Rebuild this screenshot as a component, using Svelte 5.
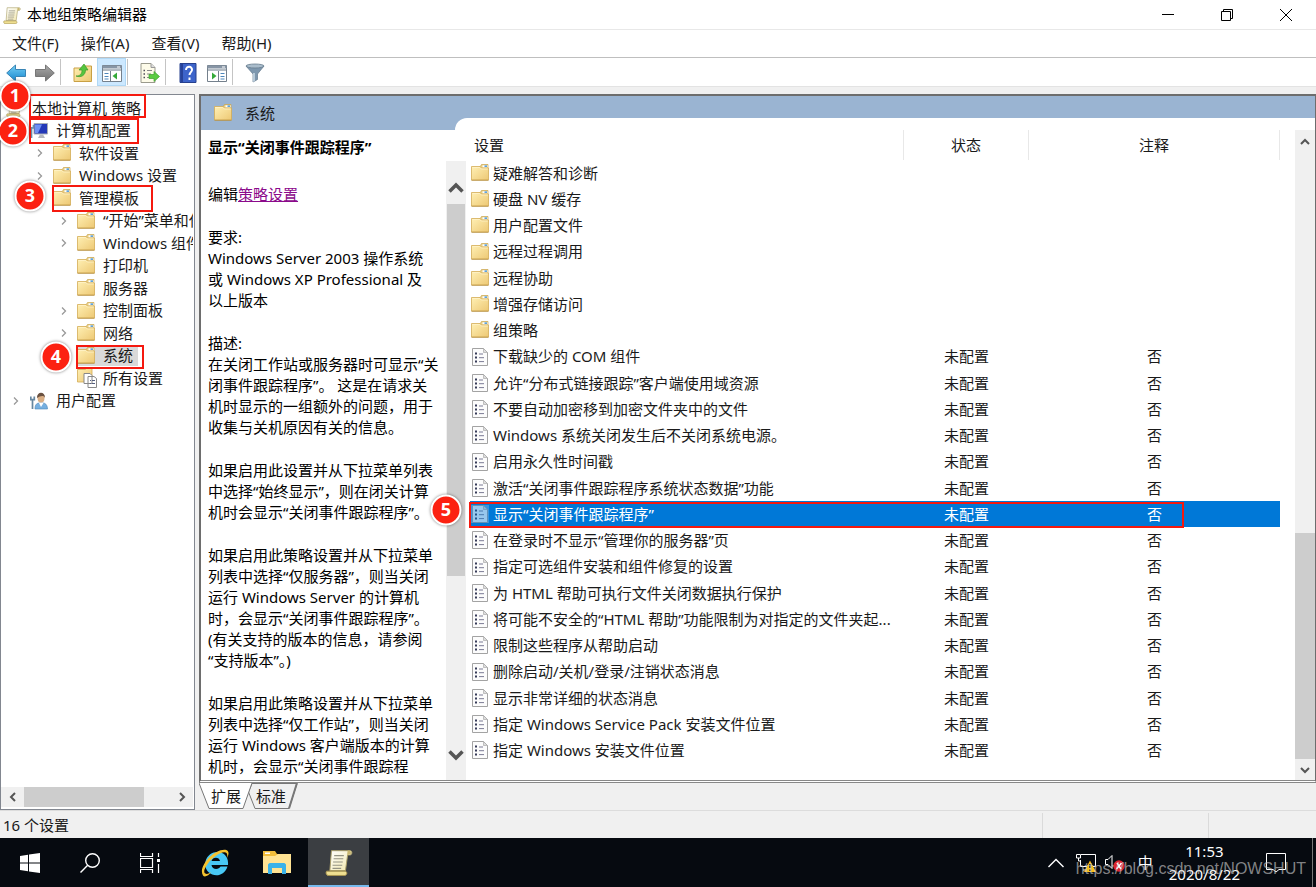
<script>
	const menus = ['文件(F)', '操作(A)', '查看(V)', '帮助(H)'];

	const tree = [
		{ label: '本地计算机 策略', level: 0, icon: 'scroll' },
		{ label: '计算机配置', level: 1, icon: 'computer' },
		{ label: '软件设置', level: 2, icon: 'folder', arrow: true },
		{ label: 'Windows 设置', level: 2, icon: 'folder', arrow: true },
		{ label: '管理模板', level: 2, icon: 'folder' },
		{ label: '“开始”菜单和任务栏', level: 3, icon: 'folder', arrow: true },
		{ label: 'Windows 组件', level: 3, icon: 'folder', arrow: true },
		{ label: '打印机', level: 3, icon: 'folder' },
		{ label: '服务器', level: 3, icon: 'folder' },
		{ label: '控制面板', level: 3, icon: 'folder', arrow: true },
		{ label: '网络', level: 3, icon: 'folder', arrow: true },
		{ label: '系统', level: 3, icon: 'folder', selected: true },
		{ label: '所有设置', level: 3, icon: 'all' },
		{ label: '用户配置', level: 1, icon: 'user', arrow: true }
	];

	const folders = ['疑难解答和诊断', '硬盘 NV 缓存', '用户配置文件', '远程过程调用', '远程协助', '增强存储访问', '组策略'];

	const settings = [
		'下载缺少的 COM 组件',
		'允许“分布式链接跟踪”客户端使用域资源',
		'不要自动加密移到加密文件夹中的文件',
		'Windows 系统关闭发生后不关闭系统电源。',
		'启用永久性时间戳',
		'激活“关闭事件跟踪程序系统状态数据”功能',
		'显示“关闭事件跟踪程序”',
		'在登录时不显示“管理你的服务器”页',
		'指定可选组件安装和组件修复的设置',
		'为 HTML 帮助可执行文件关闭数据执行保护',
		'将可能不安全的“HTML 帮助”功能限制为对指定的文件夹起...',
		'限制这些程序从帮助启动',
		'删除启动/关机/登录/注销状态消息',
		'显示非常详细的状态消息',
		'指定 Windows Service Pack 安装文件位置',
		'指定 Windows 安装文件位置'
	];

	const current = '显示“关闭事件跟踪程序”';

	const paragraphs = [
		'要求:\nWindows Server 2003 操作系统\n或 Windows XP Professional 及\n以上版本',
		'描述:\n在关闭工作站或服务器时可显示“关\n闭事件跟踪程序”。 这是在请求关\n机时显示的一组额外的问题，用于\n收集与关机原因有关的信息。',
		'如果启用此设置并从下拉菜单列表\n中选择“始终显示”，则在闭关计算\n机时会显示“关闭事件跟踪程序”。',
		'如果启用此策略设置并从下拉菜单\n列表中选择“仅服务器”，则当关闭\n运行 Windows Server 的计算机\n时，会显示“关闭事件跟踪程序”。\n(有关支持的版本的信息，请参阅\n“支持版本”。)',
		'如果启用此策略设置并从下拉菜单\n列表中选择“仅工作站”，则当关闭\n运行 Windows 客户端版本的计算\n机时，会显示“关闭事件跟踪程'
	];

	// step markers drawn over the window
	const steps = [
		{ n: 1, x: 15, y: 96, box: [29, 94, 117, 24] },
		{ n: 2, x: 13, y: 131, box: [29, 118, 110, 26] },
		{ n: 3, x: 30, y: 196, box: [52, 185, 101, 27] },
		{ n: 4, x: 56, y: 357, box: [76, 345, 68, 24] },
		{ n: 5, x: 446, y: 510, box: [469, 502, 715, 26] }
	];
</script>

{#snippet folderIcon()}
	<svg class="icon" viewBox="0 0 18 18">
		<path d="M9 3l1.500-2.500h6.500v4H9z" fill="#e9cf85" stroke="#c9a44c" stroke-width=".7" />
		<path d="M11.500 1.300h5v2.200h-5z" fill="#fff" />
		<path d="M13.500 1.300h2.500v1.700h-2.500z" fill="#5fa3dd" />
		<path d="M.5 2.500h8.500l1.500 1.500h7v12H.5z" fill="url(#folderFill)" stroke="#d3ac55" stroke-width=".8" />
		<path d="M1.300 3.500h7.500l1.500 1.500h6.500" fill="none" stroke="#fff3c9" stroke-width=".8" />
		<path d="M.5 16.300h17" stroke="#b58f43" stroke-width=".8" />
	</svg>
{/snippet}

{#snippet settingIcon()}
	<svg class="icon" viewBox="0 0 18 18">
		<path d="M1.500 .5h11l4 4v13h-15z" fill="#fcfcfc" stroke="#a3a3a3" />
		<path d="M12.500 .5v4h4z" fill="#ddd" stroke="#aaa" stroke-width=".7" />
		<path d="M4 4.500h2v2H4zM4 8.500h2v2H4zM4 12.500h2v2H4z" fill="#363b58" />
		<path d="M8 6h4M8 9.700h5M8 13.600h5" stroke="#7b7b94" />
	</svg>
{/snippet}

{#snippet scrollIcon()}
	<svg class="icon" viewBox="0 0 26 26">
		<path d="M6 2.500h17.500c2 0 2 4-.5 4h-2L19 21H4.500z" fill="url(#paperFill)" stroke="#aa9f68" stroke-width=".9" />
		<path d="M21 2.500c2.500-.5 3.500 1 3 3l-3.500 1z" fill="#c8b66f" />
		<path d="M1.500 21.500H19c2 1 1.500 3.500-.5 4H3c-2 0-2.500-3-1.500-4z" fill="#efdf91" stroke="#a89550" stroke-width=".9" />
		<path d="M8.500 7h9M8 10h9M7.500 13h9M7 16h9M7 19h8" stroke="#949383" stroke-width="1.100" />
	</svg>
{/snippet}

{#snippet chevron(d)}
	<svg class="chev" viewBox="0 0 10 10"><path {d} fill="none" stroke="#555" stroke-width="2" /></svg>
{/snippet}

<svg class="defs" aria-hidden="true">
	<defs>
		<linearGradient id="folderFill" x2="1" y2="1"><stop stop-color="#fff0b4" /><stop offset="1" stop-color="#edc874" /></linearGradient>
		<linearGradient id="paperFill" x2="1" y2="1"><stop stop-color="#fff" /><stop offset="1" stop-color="#f1e6a8" /></linearGradient>
		<linearGradient id="blueFill" y2="1" x2="0"><stop stop-color="#75d0f5" /><stop offset="1" stop-color="#1687cf" /></linearGradient>
		<linearGradient id="greyFill" y2="1" x2="0"><stop stop-color="#aaa" /><stop offset="1" stop-color="#707070" /></linearGradient>
	</defs>
</svg>

<div class="screen" lang="zh-CN">
	<header class="titlebar">
		<span class="app-icon">{@render scrollIcon()}</span>
		<span class="title">本地组策略编辑器</span>
		<button aria-label="最小化"><svg viewBox="0 0 12 12"><path d="M0 5.500h12" /></svg></button>
		<button aria-label="还原"><svg viewBox="0 0 12 12"><path d="M.5 2.500h9v9h-9zM2.500 2.500v-2h9v9h-2" /></svg></button>
		<button aria-label="关闭"><svg viewBox="0 0 12 12"><path d="M0 0l12 12M12 0L0 12" /></svg></button>
	</header>

	<nav class="menubar">
		{#each menus as menu}
			<button>{menu}</button>
		{/each}
	</nav>

	<div class="toolbar">
		<button aria-label="后退">
			<svg viewBox="0 0 20 20"><path d="M.7 10L9.500 2v4.500h10v7h-10V18z" fill="url(#blueFill)" stroke="#3984b5" /></svg>
		</button>
		<button aria-label="前进">
			<svg viewBox="0 0 20 20"><path d="M19.300 10L10.500 2v4.500H.5v7h10V18z" fill="url(#greyFill)" stroke="#777" /></svg>
		</button>
		<i></i>
		<button class="wide" aria-label="上一级">
			<svg viewBox="0 0 20 20">
				<path d="M1 5h8l2-2h7.500v15.500H1z" fill="url(#folderFill)" stroke="#c9a044" />
				<path d="M3 13c4 0 6-2 6-6H6l5-6 4 6h-2.500c0 5-4 8-9.500 6z" fill="#55c53f" stroke="#3b9a2d" stroke-width=".7" />
			</svg>
		</button>
		<button class="active" aria-label="显示/隐藏控制台树">
			<svg viewBox="0 0 20 20">
				<path d="M.5 2.500h19v16H.5z" fill="#fff" stroke="#74808c" />
				<path d="M.5 2.500h19v3H.5z" fill="#8795a5" /><path d="M15 4h3" stroke="#fff" />
				<path d="M1 7h18" stroke="#9aa4af" stroke-width="1.500" />
				<path d="M8.500 8v10" stroke="#74808c" />
				<path d="M2.500 10.500h4M2.500 13.500h4M2.500 16h4" stroke="#4f87bb" />
				<path d="M15 9.500v7L10.500 13z" fill="#35aa39" />
			</svg>
		</button>
		<i></i>
		<button class="wide" aria-label="导出列表">
			<svg viewBox="0 0 20 20">
				<path d="M1 .5h10l4 4v15H1z" fill="#fdfbe9" stroke="#9a9a8d" /><path d="M11 .5v4h4" fill="#ddd" stroke="#999" />
				<path d="M3.500 7.500h1.500M3.500 11h1.500M3.500 14.500h1.500" stroke="#4d4d58" stroke-width="1.500" /><path d="M7 7.500h5M7 11h4M7 14.500h3" stroke="#888" />
				<path d="M9 11.500h5v-3l5.500 5-5.500 5v-3H9z" fill="#5ccc42" stroke="#3ea22e" stroke-width=".7" />
			</svg>
		</button>
		<i></i>
		<button class="wide" aria-label="帮助">
			<svg viewBox="0 0 20 20">
				<path d="M2 .5h16v19H2z" fill="#3d64ca" stroke="#26408e" /><path d="M2.500 1H5v18H2.500z" fill="#274299" />
				<path d="M8 7c0-4.500 6.500-4 6 0-.2 2-2.500 2.500-2.500 5M11.500 14.500V17" fill="none" stroke="#fff" stroke-width="2" />
			</svg>
		</button>
		<button aria-label="显示/隐藏操作窗格">
			<svg viewBox="0 0 20 20">
				<path d="M.5 2.500h19v16H.5z" fill="#fff" stroke="#74808c" />
				<path d="M.5 2.500h19v3H.5z" fill="#8795a5" /><path d="M15 4h3" stroke="#fff" />
				<path d="M1 7h18" stroke="#9aa4af" stroke-width="1.500" />
				<path d="M11.500 8v10" stroke="#74808c" />
				<path d="M13.500 10.500h4M13.500 13.500h4M13.500 16h4" stroke="#4f87bb" />
				<path d="M5 9.500v7l4.500-3.500z" fill="#35aa39" />
			</svg>
		</button>
		<i></i>
		<button class="wide" aria-label="筛选器">
			<svg viewBox="0 0 20 20">
				<path d="M1 3l7 8v8l4.500-2.500V11L19 3z" fill="#7d97ae" stroke="#63798c" stroke-width=".7" />
				<path d="M8 10v9l2-1V10z" fill="#b8cad8" /><ellipse cx="10" cy="3" rx="9" ry="2" fill="#a9bccb" stroke="#667b8d" stroke-width=".8" />
			</svg>
		</button>
	</div>

	<main>
		<aside>
			<ul class="tree">
				{#each tree as node}
					<li class="level{node.level}">
						{#if node.level}
							<span class="arrow">
								{#if node.arrow}
									<svg viewBox="0 0 6 8"><path d="M1 .5L4.500 4 1 7.500" fill="none" stroke="#999" stroke-width="1.300" /></svg>
								{/if}
							</span>
						{/if}
						<span class="node" class:selected={node.selected}>
							{#if node.icon === 'folder'}
								{@render folderIcon()}
							{:else if node.icon === 'scroll'}
								{@render scrollIcon()}
							{:else if node.icon === 'computer'}
								<svg class="icon" viewBox="0 0 18 18">
									<path d="M4 1.500h13.500v10.500H4z" fill="#2439b8" stroke="#a9adb5" />
									<path d="M5 2.500h7L8 11H5z" fill="#6f91f3" />
									<path d="M10 12.500h3l2 3.500H8z" fill="#b5b8bd" />
									<path d="M1.500 5v11M0 3v3h3.500V3" fill="none" stroke="#6b8ea9" stroke-width="1.700" />
								</svg>
							{:else if node.icon === 'all'}
								<svg class="icon big" viewBox="0 0 20 20">
									<path d="M.5 1.500h8l1-1.500h5.500v14H.5z" fill="url(#folderFill)" stroke="#d3ac55" stroke-width=".8" />
									<path d="M7 5.500h6l2 2v8H7zM11 8.500h6l2.500 2v9H11z" fill="#fff" stroke="#888" />
									<path d="M13 12.500h1M13 15.500h1M15 12.500h3M15 15.500h3" stroke="#555f80" />
								</svg>
							{:else}
								<svg class="icon" viewBox="0 0 18 18">
									<path d="M5 17c0-5 2-6 5-6h3c3 0 4.500 3 4.500 6z" fill="#75afe0" stroke="#4c86b8" stroke-width=".6" />
									<path d="M9 11l2 4 2.500-4z" fill="#fff" />
									<ellipse cx="11" cy="6" rx="3.500" ry="4.500" fill="#d9ae84" /><path d="M7 6c-.5-7 8.500-7 8 0-1-3-5-2-8 0z" fill="#6a5140" />
									<path d="M2.500 8v9M.8 4.500v3.200h3.500V4.500" fill="none" stroke="#66869f" stroke-width="1.700" />
								</svg>
							{/if}
							<span class="label">{node.label}</span>
						</span>
					</li>
				{/each}
			</ul>
			<div class="hscroll">
				<button aria-label="向左滚动">{@render chevron('M7 1L3 5l4 4')}</button>
				<span class="thumb"></span>
				<span class="rest"></span>
				<button aria-label="向右滚动">{@render chevron('M3 1l4 4-4 4')}</button>
			</div>
		</aside>

		<section class="right">
			<div class="panel">
				<div class="band">
					<div class="band-title">{@render folderIcon()}<span>系统</span></div>
					<div class="band-curve"></div>
				</div>
				<div class="columns">
					<article>
						<h2>{current}</h2>
						<div class="details">
							<div class="text">
								<p>编辑<a href="#settings">策略设置</a></p>
								{#each paragraphs as paragraph}
									<p>{paragraph}</p>
								{/each}
							</div>
							<div class="vscroll inner">
								<button aria-label="向上滚动"><svg viewBox="0 0 16 12"><path d="M1.500 9.500L8 3l6.500 6.500" fill="none" stroke="#555" stroke-width="3.500" /></svg></button>
								<span class="thumb"></span>
								<span class="rest"></span>
								<button aria-label="向下滚动"><svg viewBox="0 0 16 12"><path d="M1.500 2.500L8 9l6.500-6.500" fill="none" stroke="#555" stroke-width="3.500" /></svg></button>
							</div>
						</div>
					</article>

					<div class="list" id="settings">
						<table>
							<thead>
								<tr><th class="name">设置</th><th class="state">状态</th><th class="note">注释</th></tr>
							</thead>
							<tbody>
								{#each folders as folder}
									<tr>
										<td><span class="cell">{@render folderIcon()}{folder}</span></td>
										<td></td>
										<td></td>
									</tr>
								{/each}
								{#each settings as setting}
									<tr class:current={setting === current}>
										<td><span class="cell">{@render settingIcon()}<span>{setting}</span></span></td>
										<td>未配置</td>
										<td>否</td>
									</tr>
								{/each}
							</tbody>
						</table>
					</div>

					<div class="vscroll outer">
						<button aria-label="向上滚动">{@render chevron('M1 7l4-4 4 4')}</button>
						<span class="rest"></span>
						<span class="thumb"></span>
						<button aria-label="向下滚动">{@render chevron('M1 3l4 4 4-4')}</button>
					</div>
				</div>
			</div>

			<div class="tabs">
				<button class="front">
					<svg viewBox="0 0 54 27"><path d="M0 0l10 25.500h34L53 0" fill="#fff" stroke="#777" /></svg>
					<span>扩展</span>
				</button>
				<button>
					<svg viewBox="0 0 54 27"><path d="M53 .5H8L4.500 9l6.500 16.500h34z" fill="#f0f0f0" stroke="#777" /><path d="M45 25.500L53 0" stroke="#777" stroke-width="2" /></svg>
					<span>标准</span>
				</button>
			</div>
		</section>
	</main>

	<footer class="status">
		<span class="count">16 个设置</span>
		<span class="part"></span>
		<span class="part small"></span>
	</footer>

	<div class="taskbar">
		<button aria-label="开始">
			<svg viewBox="0 0 20 20"><path d="M0 3l8-1.200v7.700H0zM9 1.600L20 0v9.500H9zM0 10.500h8v7.700L0 17zM9 10.500h11V20L9 18.400z" fill="#fff" /></svg>
		</button>
		<button aria-label="搜索">
			<svg viewBox="0 0 20 20"><circle cx="12.500" cy="7.500" r="6.800" fill="none" stroke="#fff" stroke-width="1.400" /><path d="M7.700 12.300L.5 19.500" stroke="#fff" stroke-width="1.400" /></svg>
		</button>
		<button aria-label="任务视图">
			<svg viewBox="0 0 20 20"><path d="M.5 0v3.500h12V0M.5 5.500h12v9H.5zM.5 20v-3.500h12V20M18.500 0v4M18.500 11v9" fill="none" stroke="#fff" stroke-width="1.200" /><path d="M17 6h3v3h-3z" fill="#fff" /></svg>
		</button>
		<button class="app first" aria-label="Internet Explorer">
			<svg class="large" viewBox="0 0 28 28">
				<path d="M26.500 17.500h-7c-1.500 3.500-8.500 3.500-9-1.500h16.500C28.500 0 8 -1 4.500 12.500c-3 14 17 20 22 5zM10.500 12c1-4.500 8-4.500 8.500 0z" fill="#48c8f5" />
				<path d="M2 26.500C-3.500 18 13-.5 24.500 .8c4 .7 3.500 4.500 1.500 8.200 1-4-.5-6-3-5.700C13 4.500 1.500 19.500 3.500 23.800c1.200 2 4.500 1 7-.8-3 4-7 5.500-8.500 3.500z" fill="#f4c330" />
			</svg>
		</button>
		<button class="app" aria-label="文件资源管理器">
			<svg class="large" viewBox="0 0 28 28">
				<path d="M0 2h12l2 3h14v18H0z" fill="#f1bd3b" /><path d="M2 3.500h5v1.500H2z" fill="#fff" />
				<path d="M0 7h12l3-2h13v19H0z" fill="#ffe393" /><path d="M5 25V16c0-1 1-2 2-2h14c1 0 2 1 2 2v9h-4v-6h-10v6z" fill="#3ab2e9" />
			</svg>
		</button>
		<button class="app running" aria-label="本地组策略编辑器"><span class="task-scroll">{@render scrollIcon()}</span></button>

		<div class="tray">
			<svg class="up" viewBox="0 0 16 10"><path d="M.5 9L8 1.500 15.500 9" fill="none" stroke="#fff" stroke-width="1.400" /></svg>
			<svg viewBox="0 0 20 20">
				<path d="M5 1.500h14.500v12H4.500V7M7 17h6M.5 1.500h4v3.500h-4zM2.500 5v3h2" fill="none" stroke="#fff" />
				<path d="M14 7.500L20 19H8z" fill="#fbbd18" /><path d="M14 11v4M14 16.500v1.500" stroke="#222" stroke-width="1.600" />
			</svg>
			<svg viewBox="0 0 20 20">
				<path d="M.5 6.500H3l4-4v13l-4-4H.5z" fill="none" stroke="#fff" />
				<circle cx="14" cy="13" r="5.700" fill="#dc2430" /><path d="M11.500 16l5-6M12 10l4 6" stroke="#fff" stroke-width="1.500" />
			</svg>
			<span class="ime">中</span>
			<time><span>11:53</span><span>2020/8/22</span></time>
			<svg class="notes" viewBox="0 0 20 20"><path d="M.5.5h19v16H13L10 19l-3-2.500H.5z" fill="none" stroke="#fff" /></svg>
			<span class="peek"></span>
		</div>
		<span class="watermark">https://blog.csdn.net/NOWSHUT</span>
	</div>

	{#each steps as step}
		<div class="box" style="left: {step.box[0]}px; top: {step.box[1]}px; width: {step.box[2]}px; height: {step.box[3]}px"></div>
	{/each}
	{#each steps as step}
		<b class="badge" style="left: {step.x}px; top: {step.y}px">{step.n}</b>
	{/each}
</div>

<style>
	:global(body) {
		margin: 0;
		overflow: hidden;
	}

	.screen {
		position: relative;
		display: flex;
		flex-direction: column;
		height: 100vh;
		overflow: hidden;
		background: #f0f0f0;
		color: #1a1a1a;
		font: 15px/21px "Noto Sans", "Noto Sans CJK SC", sans-serif;
		white-space: nowrap;
	}

	.defs {
		position: absolute;
		width: 0;
		height: 0;
	}

	button {
		display: flex;
		align-items: center;
		justify-content: center;
		padding: 0;
		border: 0;
		background: none;
		color: inherit;
		font: inherit;
	}

	.icon {
		display: block;
		flex: none;
		width: 18px;
		height: 18px;
	}

	.icon.big {
		width: 20px;
		height: 20px;
		margin-right: -2px;
	}

	/* window frame */
	.titlebar {
		display: flex;
		align-items: center;
		height: 29px;
		padding-right: 1px;
		border-bottom: 1px solid #e8e8e8;
		background: #fff;
		color: #000;
	}

	.app-icon {
		margin: 0 6px 0 3px;
	}

	.title {
		flex: 1;
	}

	.titlebar button {
		width: 59px;
		height: 28px;
	}

	.titlebar button svg {
		width: 12px;
		height: 12px;
		fill: none;
		stroke: #000;
	}

	.menubar {
		display: flex;
		height: 27px;
		padding-left: 1px;
		border-bottom: 1px solid #bfbfbf;
		background: #fff;
	}

	.menubar button {
		height: 26px;
		padding: 0 11px;
	}

	.toolbar {
		display: flex;
		align-items: center;
		height: 28px;
		padding-left: 1px;
		border-bottom: 1px solid #e3e3e3;
		background: #fff;
	}

	.toolbar button {
		width: 29px;
		height: 28px;
	}

	.toolbar .wide {
		margin-left: 7px;
	}

	.toolbar .active {
		background: #cce8ff;
		outline: 1px solid #b0d8f5;
		outline-offset: -1px;
	}

	.toolbar svg {
		width: 20px;
		height: 20px;
		padding-top: 1px;
	}

	.toolbar i {
		width: 1px;
		height: 26px;
		margin-left: 1px;
		background: #c4c4c4;
	}

	/* console tree */
	main {
		display: flex;
		flex: 1;
		min-height: 0;
		padding-top: 7px;
	}

	aside {
		display: flex;
		flex-direction: column;
		box-sizing: border-box;
		width: 195px;
		margin-right: 4px;
		border: 1px solid #828790;
		background: #fff;
		overflow: hidden;
	}

	.tree {
		display: grid;
		grid-auto-rows: 1fr;
		height: 315px;
		margin: 0 1px auto 0;
		padding: 2px 0 0;
		list-style: none;
		overflow: hidden;
	}

	.tree li {
		display: flex;
		align-items: center;
		min-height: 0;
	}

	.level0 {
		padding-left: 5px;
	}

	.level1 {
		padding-left: 7px;
	}

	.level2 {
		padding-left: 31px;
	}

	.level3 {
		padding-left: 55px;
	}

	.arrow {
		display: flex;
		justify-content: center;
		width: 16px;
		margin-right: 4px;
	}

	.arrow svg {
		width: 6px;
		height: 8px;
	}

	.node {
		display: flex;
		align-items: center;
		gap: 8px;
		padding: 0 5px 0 2px;
	}

	.level0 .node {
		padding-left: 0;
	}

	.level2 .node,
	.level3 .node {
		padding-left: 1px;
	}

	.selected {
		background: #d9d9d9;
	}

	.hscroll {
		display: flex;
		height: 20px;
		margin: 0 1px 2px 0;
		background: #f0f0f0;
	}

	.hscroll button {
		width: 23px;
	}

	.thumb {
		background: #cdcdcd;
	}

	.hscroll .thumb {
		flex: 120;
	}

	.hscroll .rest {
		flex: 26;
	}

	.chev {
		width: 10px;
		height: 10px;
	}

	/* result pane */
	.right {
		display: flex;
		flex: 1;
		flex-direction: column;
		min-width: 0;
	}

	.panel {
		display: flex;
		flex: 1;
		flex-direction: column;
		min-height: 0;
		border: 2px solid #6d6d6d;
		border-right-width: 1px;
		border-bottom: 3px double #888;
		background: #fff;
	}

	.band {
		display: flex;
		height: 34px;
		background: #9ab4d2;
	}

	.band-title {
		display: flex;
		align-items: center;
		gap: 13px;
		width: 241px;
		padding-left: 13px;
	}

	.band-curve {
		flex: 1;
		align-self: flex-end;
		height: 12px;
		border-radius: 12px 0 0;
		background: #fff;
	}

	.columns {
		display: flex;
		flex: 1;
		min-height: 0;
	}

	article {
		display: flex;
		flex-direction: column;
		width: 265px;
		color: #000;
	}

	h2 {
		margin: 0;
		padding: 7px 0 3px 7px;
		font-size: 15px;
		line-height: 21px;
	}

	.details {
		display: flex;
		flex: 1;
		min-height: 0;
	}

	.text {
		flex: 1;
		padding: 23px 0 0 7px;
		overflow: hidden;
	}

	p {
		margin: 0 0 22px;
		white-space: pre;
	}

	a {
		color: #8b0a8b;
	}

	.vscroll {
		display: flex;
		flex-direction: column;
		width: 20px;
		background: #f0f0f0;
	}

	.inner button {
		height: 43px;
		padding-top: 10px;
	}

	.inner button:last-child {
		padding: 0 0 8px;
	}

	.inner svg {
		width: 16px;
		height: 12px;
	}

	.inner .thumb {
		flex: 371;
		margin: 0 1px;
	}

	.inner .rest {
		flex: 161;
	}

	.outer button {
		height: 23px;
	}

	.outer .rest {
		flex: 381;
	}

	.outer .thumb {
		flex: 226;
	}

	.outer button:last-child {
		height: 21px;
	}

	.list {
		flex: 1;
		min-width: 0;
		padding: 0 15px 0 4px;
		overflow: hidden;
	}

	table {
		width: 100%;
		border-collapse: separate;
		border-spacing: 0;
		table-layout: fixed;
	}

	th {
		height: 30px;
		padding: 0;
		border-right: 1px solid #e8e8e8;
		font-weight: normal;
	}

	.name {
		padding-left: 4px;
		text-align: left;
	}

	.state {
		width: 124px;
	}

	.note {
		width: 250px;
	}

	td {
		height: 26px;
		padding: 0;
		text-align: center;
	}

	tr:nth-child(4n) td {
		height: 27px;
	}

	.cell {
		display: flex;
		align-items: center;
		gap: 4px;
		padding-left: 1px;
	}

	.current td {
		background: #0078d7;
		color: #fff;
	}

	.current .icon {
		background: #5fa8e3;
		opacity: .6;
	}

	.tabs {
		display: flex;
		height: 27px;
	}

	.tabs button {
		position: relative;
		width: 54px;
		margin-right: -9px;
	}

	.tabs svg {
		position: absolute;
		inset: 0;
		width: 54px;
		height: 27px;
	}

	.tabs span {
		position: relative;
	}

	.tabs .front {
		z-index: 1;
	}

	.status {
		display: flex;
		align-items: center;
		height: 27px;
		border-top: 1px solid #dcdcdc;
	}

	.count {
		flex: 1;
		padding: 2px 0 0 3px;
	}

	.part {
		align-self: stretch;
		width: 165px;
		margin-top: 2px;
		border-left: 1px solid #dadada;
	}

	.small {
		width: 107px;
	}

	/* taskbar */
	.taskbar {
		position: relative;
		display: flex;
		height: 49px;
		background: #060a10;
		color: #fff;
	}

	.taskbar > button {
		width: 60px;
	}

	.taskbar > .app {
		width: 61px;
		margin-right: 1px;
	}

	.taskbar .first {
		margin-left: 4px;
	}

	.taskbar svg {
		width: 20px;
		height: 20px;
	}

	.taskbar .large {
		width: 28px;
		height: 28px;
	}

	.running {
		box-sizing: border-box;
		border-bottom: 2px solid #76b9ed;
		background: #3b3e42;
	}

	.task-scroll :global(.icon) {
		width: 28px;
		height: 28px;
	}

	.tray {
		display: flex;
		align-items: center;
		margin-left: auto;
	}

	.tray svg {
		margin-right: 9px;
	}

	.tray .up {
		width: 16px;
		height: 10px;
		margin-right: 12px;
	}

	.ime {
		margin: 0 16px 0 4px;
	}

	time {
		display: flex;
		flex-direction: column;
		align-items: center;
		padding-top: 1px;
		line-height: 23px;
	}

	.tray .notes {
		margin: 0 26px;
	}

	.peek {
		align-self: stretch;
		width: 3px;
		border-left: 1px solid #777;
	}

	.watermark {
		position: absolute;
		right: 10px;
		bottom: 8px;
		color: rgba(200, 200, 200, .65);
		font-family: "Liberation Sans", sans-serif;
		font-size: 16px;
	}

	/* step markers */
	.box {
		position: absolute;
		box-sizing: border-box;
		border: 2px solid #f5190f;
	}

	.badge {
		position: absolute;
		width: 27px;
		height: 27px;
		border: 2px solid #fff;
		border-radius: 50%;
		background: #fc2111;
		box-shadow: 0 0 3px rgba(0, 0, 0, .5);
		color: #fff;
		font-size: 18px;
		line-height: 25px;
		text-align: center;
		transform: translate(-50%, -50%);
	}
</style>
